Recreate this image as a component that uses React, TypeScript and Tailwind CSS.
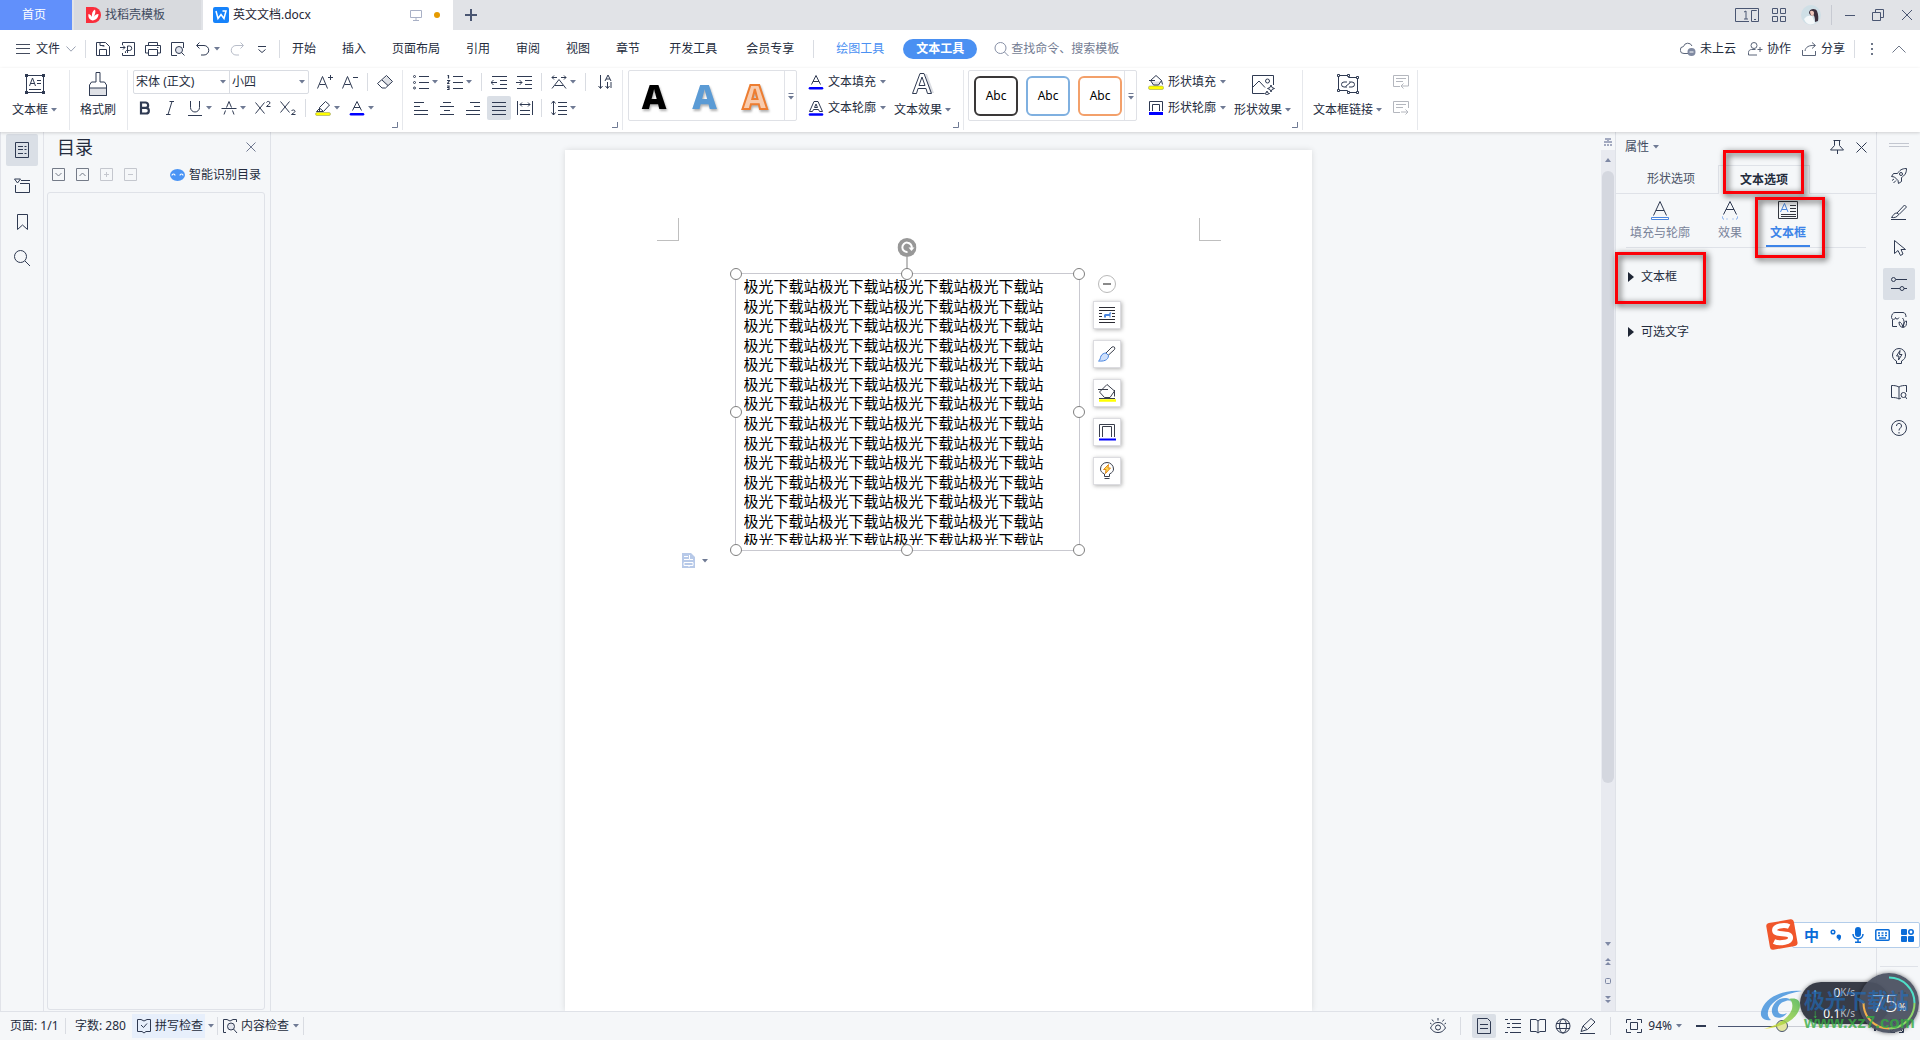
import type { ReactNode } from "react";

const INK = "#2f3a52";
const PHRASE = "极光下载站";

/* ---------- small building blocks ---------- */

function Ico({ w = 16, h = 16, c = INK, children }: { w?: number; h?: number; c?: string; children: ReactNode }) {
  return (
    <svg width={w} height={h} viewBox={`0 0 ${w} ${h}`} fill="none" stroke={c} className="block shrink-0" aria-hidden="true">
      {children}
    </svg>
  );
}

function Caret() {
  return (
    <svg width="6" height="4" viewBox="0 0 6 4" className="block shrink-0" aria-hidden="true">
      <path d="M0 0h6L3 3.6z" fill="#6f7a94" />
    </svg>
  );
}

function Sep({ tall = false }: { tall?: boolean }) {
  return <div className={tall ? "w-px h-[60px] shrink-0 bg-[#e6e8ec]" : "w-px h-[18px] shrink-0 bg-[#d9dce2]"} />;
}

function Btn({ label, drop, children }: { label: string; drop?: boolean; children: ReactNode }) {
  return (
    <button aria-label={label} className="flex items-center gap-[3px] shrink-0">
      {children}
      {drop && <Caret />}
    </button>
  );
}

function BigBtn({ label, drop, children }: { label: string; drop?: boolean; children: ReactNode }) {
  return (
    <button className="flex flex-col items-center shrink-0">
      <span className="flex h-7 items-center">{children}</span>
      <span className="flex h-6 items-center gap-[3px] leading-4">
        {label}
        {drop && <Caret />}
      </span>
    </button>
  );
}

function RowBtn({ label, children }: { label: string; children: ReactNode }) {
  return (
    <button className="flex h-6 items-center gap-1 leading-[18px]">
      {children}
      {label}
      <Caret />
    </button>
  );
}

function Launcher() {
  return (
    <button aria-label="更多设置" className="absolute right-1 bottom-1">
      <Ico w={6} h={6} c="#6f7a94">
        <path d="M5.5 0v5.5H0" />
      </Ico>
    </button>
  );
}

/* ---------- title bar ---------- */

function TitleBar() {
  return (
    <header className="flex h-[30px] shrink-0 items-stretch bg-[#e1e3e7]">
      <button className="w-[72px] bg-[#6190fb] pr-1 text-white">首页</button>
      <button className="ml-[2px] flex w-[127px] items-center gap-1 bg-[#d8dade] pl-3 text-[#3f4a60]">
        <svg width="15" height="16" viewBox="0 0 15 16">
          <path d="M0 0h7a8 8 0 0 1 0 16H0z" fill="#fa2e3c" />
          <path d="M6.500 13.500C3 12.500 2 10 2.500 7c2 .5 3 1.500 3.500 3C5.500 6.500 6.500 4 9 2.500c1 2.500 0 5-1.500 8 1-2 2.500-3.500 5-3.500 0 3.500-2.500 6-6 6.500z" fill="#fff" />
        </svg>
        找稻壳模板
      </button>
      <div className="ml-[2px] flex w-[250px] items-center bg-white pl-[10px] text-[#1f2635]">
        <svg width="16" height="16" viewBox="0 0 16 16">
          <rect width="16" height="16" rx="2" fill="#1683fb" />
          <path d="M3 4l2 7.500L8 7.500l3 4L13 4H9.500" fill="none" stroke="#fff" strokeWidth="1.500" />
        </svg>
        <span className="ml-1 flex-1">英文文档.docx</span>
        <Ico w={12} h={12} c="#a9b1c6">
          <path d="M.5 1.500h11v7H.5zM6 8.500v3M3 11.500h6" />
        </Ico>
        <span className="mr-[13px] ml-3 size-[6px] rounded-full bg-[#e59a00]" />
      </div>
      <button aria-label="新建" className="flex w-9 items-center justify-center">
        <Ico w={12} h={12} c="#4a5672">
          <path d="M6 0v12M0 6h12" strokeWidth="2" />
        </Ico>
      </button>
      <div className="ml-auto flex items-center pr-[7px]">
        <Ico w={24} h={14} c="#4a5672">
          <path d="M14 13.500H.5V.5h23v13h-7v-11h5V2M19 11.500h2M9 4l2-1v8M9 11h4" />
        </Ico>
        <span className="ml-[13px]">
          <Ico w={14} h={14} c="#4a5672">
            <path d="M.5.5h5v5h-5zM8.500.5h5v5h-5zM.5 8.500h5v5h-5zM8.500 8.500h5v5h-5z" />
          </Ico>
        </span>
        <svg width="20" height="20" viewBox="0 0 20 20" className="ml-[15px]">
          <circle cx="10" cy="10" r="10" fill="#cfdfe6" />
          <path d="M8 8c0-5 7-5 8-2 1.500 4 1.500 7 1 10l-3 1c0-4-.5-6-1.500-7-1 2-3 1-4.500-2z" fill="#3b2f3c" />
          <path d="M9 6.500c1.500-1.500 4-.5 4 1.500s-1 3-2 3-2-2.500-2-4.500z" fill="#f1c9bd" />
          <path d="M3 14c2-3 5-4 8-3l3 7c-5 3-9 1-11-4z" fill="#f4f8fa" />
        </svg>
        <div className="mx-[10px] h-5 w-px bg-[#c7cad2]" />
        <button aria-label="最小化" className="mx-[2px]">
          <Ico w={12} h={12} c="#4a5672"><path d="M1 6.500h10" /></Ico>
        </button>
        <button aria-label="还原" className="ml-[14px]">
          <Ico w={12} h={12} c="#4a5672"><path d="M.5 3.500h8v8h-8zM3.500 3V.5h8v8H9" /></Ico>
        </button>
        <button aria-label="关闭" className="ml-[17px]">
          <Ico w={12} h={12} c="#4a5672"><path d="M1 1l10 10M11 1L1 11" /></Ico>
        </button>
      </div>
    </header>
  );
}

/* ---------- menu bar ---------- */

const MENUS = ["开始", "插入", "页面布局", "引用", "审阅", "视图", "章节"];
const EXTRA_MENUS = ["开发工具", "会员专享"];

function MenuBar() {
  return (
    <nav className="flex h-[38px] shrink-0 items-center bg-white pl-4">
      <button className="flex items-center leading-[18px]">
        <Ico w={14} h={10} c="#444c5e"><path d="M0 .5h14M0 4.500h14M0 9.500h14" /></Ico>
        <span className="mx-[6px]">文件</span>
        <Ico w={10} h={6} c="#9aa1b1"><path d="M.5.5L5 5.200 9.500.5" /></Ico>
      </button>
      <div className="ml-[9px] flex items-center gap-[9px]">
        <Sep />
        <Btn label="保存">
          <Ico><path d="M1.500 1.500h9l4 4v9h-13zM4.500 14V8.500h7V14M5 1.500v3h4M7.500 5h2" /></Ico>
        </Btn>
        <Btn label="输出为PDF">
          <Ico><path d="M2.500 4V1.500h12v13h-12V12M0 6.500h5M3 4.500l2 2-2 2M7.500 12V5h2a2 2 0 0 1 0 4.500h-3a2 2 0 0 0-1 2.500" /></Ico>
        </Btn>
        <Btn label="打印">
          <Ico><path d="M3.500 4V1.500h9V4M3.500 12h-3V4.500h15V12h-3M3.500 8.500h9v6h-9zM12 6.500h1.500" /></Ico>
        </Btn>
        <Btn label="打印预览">
          <Ico><path d="M7 14.500H1.500v-13h12V7" /><circle cx="9" cy="9" r="3.500" fill="#e3e6ee" /><path d="M11.500 11.500l3 3" /></Ico>
        </Btn>
        <Btn label="撤销" drop>
          <Ico><path d="M4.500 1.500l-3 3 3 3M2 4.500h7a4.500 4.500 0 0 1 0 9.500H6" /></Ico>
        </Btn>
        <Btn label="恢复">
          <Ico c="#b8bdc9"><path d="M11.500 1.500l3 3-3 3M14 4.500H7A4.500 4.500 0 0 0 7 14h3" /></Ico>
        </Btn>
        <Btn label="自定义快速访问工具栏">
          <Ico><path d="M4 5.500h8M4.500 8.500L8 11.500l3.500-3" /></Ico>
        </Btn>
        <Sep />
      </div>
      <div className="ml-3 flex items-center gap-[26px] leading-[18px]">
        {MENUS.map((m) => (
          <button key={m}>{m}</button>
        ))}
      </div>
      <div className="ml-[29px] flex items-center gap-[29px] leading-[18px]">
        {EXTRA_MENUS.map((m) => (
          <button key={m}>{m}</button>
        ))}
      </div>
      <div className="ml-[19px] flex items-center leading-[18px]">
        <Sep />
        <button className="ml-[22px] text-[#4a90f2]">绘图工具</button>
        <button className="ml-[19px] h-5 w-[74px] rounded-full bg-[#4a90f2] font-bold text-white">文本工具</button>
        <label className="ml-[17px] flex items-center gap-[2px]">
          <Ico w={15} c="#8790a6"><circle cx="6.500" cy="7" r="5.500" /><path d="M10.500 11l4 4" /></Ico>
          <input aria-label="查找命令" placeholder="查找命令、搜索模板" className="w-[120px] bg-transparent outline-none placeholder:text-[#737c93]" />
        </label>
      </div>
      <div className="ml-auto flex items-center pr-[14px] leading-[18px]">
        <button className="flex items-center gap-1">
          <Ico c="#5b6579">
            <path d="M8 12.500H4a3.500 3.500 0 0 1-.5-7A4.500 4.500 0 0 1 12 5" />
            <circle cx="11.500" cy="11" r="4" fill="#7f89a1" stroke="none" />
            <path d="M9.500 11h4" stroke="#fff" />
          </Ico>
          未上云
        </button>
        <button className="ml-3 flex items-center gap-1">
          <Ico w={15} c="#5b6579"><circle cx="6" cy="4.500" r="3" /><path d="M9 14H.5v-2.500c0-2 1.500-3 3-3h4M12 6v5M9.500 8.500h5" /></Ico>
          协作
        </button>
        <button className="ml-[11px] flex items-center gap-1">
          <Ico w={15} c="#5b6579"><path d="M.5 9v5.500h13V10M3 10c.5-4 4-6 10-5.500M10 1.500l3.500 3-3.500 3" /></Ico>
          分享
        </button>
        <div className="ml-[9px]"><Sep /></div>
        <button aria-label="更多" className="mr-[18px] ml-4">
          <svg width="3" height="14" viewBox="0 0 3 14"><path d="M0 1h2v2H0zM0 6h2v2H0zM0 11h2v2H0z" fill="#6d7688" /></svg>
        </button>
        <button aria-label="收起功能区">
          <Ico w={14} h={8} c="#6d7688"><path d="M.5 7.500L7 1l6.500 6.500" /></Ico>
        </button>
      </div>
    </nav>
  );
}

/* ---------- ribbon ---------- */

function OutlinedBox() {
  return (
    <Ico>
      <path d="M1.500 11V1.500h13V11M4.500 11V4.500h7V11" />
      <path d="M1 13.500h14" stroke="#0000ff" strokeWidth="3" />
    </Ico>
  );
}

function Bucket() {
  return (
    <Ico>
      <path d="M3 7.500h10l-3 4.500H6z" fill="#dfe1e6" stroke="none" />
      <path d="M2.500 6.500l5.500-5 5.500 5-3 4.500h-5zM1 6.500h6M13.500 6.500l1 4" />
      <rect x=".5" y="12" width="15" height="3.500" rx="1.500" fill="#ffff00" stroke="#8b8f5a" strokeWidth=".5" />
    </Ico>
  );
}

const TEXT_STYLES = [
  { name: "黑色", cls: "text-black" },
  { name: "蓝色", cls: "text-[#5b9bd5]" },
  { name: "橙色轮廓", cls: "text-[#f8cbad] [-webkit-text-stroke:2px_#ed7d31]" },
];

const SHAPE_STYLES = [
  { name: "黑色形状", cls: "border-[#3a3838]" },
  { name: "蓝色形状", cls: "border-[#7fb0e0]" },
  { name: "橙色形状", cls: "border-[#f3a06a]" },
];

function GalleryMore() {
  return (
    <button aria-label="更多样式" className="flex w-3 items-center justify-center self-stretch border-l border-[#e1e3e8]">
      <Ico w={6} h={8} c="#6f7a94"><path d="M.5 1.500h5" /><path d="M0 4h6L3 7.500z" fill="#6f7a94" stroke="none" /></Ico>
    </button>
  );
}

function Ribbon() {
  return (
    <section className="relative z-10 flex h-16 shrink-0 bg-white pt-[2px] leading-4 shadow-[0_1px_3px_rgba(0,0,0,0.16)]">
      <div className="flex pr-3 pl-3">
        <BigBtn label="文本框" drop>
          <Ico w={22} h={22}>
            <path d="M2.500 2.500h17v17h-17z" />
            <path d="M1 1h3v3H1zM18 1h3v3h-3zM1 18h3v3H1zM18 18h3v3h-3z" fill={INK} stroke="none" />
            <path d="M5.500 13l3-8 3 8M6.500 10.500h4M13 7.500h4M13 10.500h4M5 16.500h12" />
          </Ico>
        </BigBtn>
      </div>
      <Sep tall />
      <div className="flex pr-[11px] pl-[10px]">
        <BigBtn label="格式刷">
          <Ico w={20} h={26}>
            <path d="M1.500 17h17v7.500h-17z" fill="#dfe1e6" />
            <path d="M8 1.500h4V11h4.500l2 3v10.500h-17V14l2-3H8z" />
          </Ico>
        </BigBtn>
      </div>
      <Sep tall />

      <div className="relative flex flex-col gap-[2px] pr-[9px] pl-[5px]">
        <div className="flex h-6 items-center">
          <div className="flex h-6 rounded-[2px] border border-[#d9dce2]">
            <label className="relative flex items-center">
              <select aria-label="字体" className="w-[95px] appearance-none pl-[2px]"><option>宋体 (正文)</option></select>
              <span className="pointer-events-none absolute right-[3px]"><Caret /></span>
            </label>
            <label className="relative flex items-center border-l border-[#d9dce2]">
              <select aria-label="字号" className="w-[78px] appearance-none pl-[2px]"><option>小四</option></select>
              <span className="pointer-events-none absolute right-[3px]"><Caret /></span>
            </label>
          </div>
          <div className="ml-2 flex items-center gap-[9px]">
            <Btn label="增大字号"><Ico><path d="M.5 14.500l5-12 5 12M2.500 10.500h6M13.500 1v5M11 3.500h5" /></Ico></Btn>
            <Btn label="减小字号"><Ico><path d="M.5 14.500l5-12 5 12M2.500 10.500h6M11 3.500h5" /></Ico></Btn>
            <Sep />
            <Btn label="清除格式"><Ico><path d="M5 7l5-5 5.500 5.500-5 5z" fill="#dfe1e6" stroke="none" /><path d="M.5 9.500L9.500 1.500l6 6-7 6.500H5zM5 6l6 5.500" /></Ico></Btn>
          </div>
        </div>
        <div className="ml-1 flex h-6 items-center gap-[9px]">
          <Btn label="加粗"><Ico><path d="M4 2.500v11h5a2.800 2.800 0 0 0 0-5.700H4h4.500a2.600 2.600 0 0 0 0-5.300z" strokeWidth="2.200" /></Ico></Btn>
          <Btn label="倾斜"><Ico><path d="M7.500 1.500H12M4 14.500h4.500M10 1.500l-4 13" /></Ico></Btn>
          <Btn label="下划线" drop><Ico><path d="M3.500 1v6.500a4.500 4.500 0 0 0 9 0V1M1 15.500h14" /></Ico></Btn>
          <Btn label="删除线" drop><Ico><path d="M3 14.500l1.500-4M5.500 7.500L8 1.500l2.500 6M11.500 10.500l1.500 4M.5 8.500h15" /></Ico></Btn>
          <Btn label="上标"><Ico><path d="M.5 2.500l9 11M9.500 2.500l-9 11M11.500 2.500c.5-1.500 3.500-1.500 3.500.5 0 1-3.500 3-3.500 3.500H15.500" /></Ico></Btn>
          <Btn label="下标"><Ico><path d="M.5 1.500l9 11M9.500 1.500l-9 11M11.500 11c.5-1.500 3.500-1.500 3.500.5 0 1-3.500 2.500-3.500 3H15.500" /></Ico></Btn>
          <Sep />
          <Btn label="突出显示" drop>
            <Ico>
              <path d="M4.500 7.500l6-6 4 3.500-6 6.500h-4zM4.500 8l3.500 3M4 9l-2.500 2.500H6" />
              <rect x=".5" y="12.500" width="15" height="3" rx="1.500" fill="#ffff00" stroke="#8b8f5a" strokeWidth=".5" />
            </Ico>
          </Btn>
          <Btn label="字体颜色" drop>
            <Ico><path d="M3.500 10.500l4.500-9 4.500 9M5 7.500h6" /><path d="M2 14.200h12" stroke="#0000ff" strokeWidth="2.600" strokeLinecap="round" /></Ico>
          </Btn>
        </div>
        <Launcher />
      </div>
      <Sep tall />

      <div className="relative flex w-[219px] flex-col gap-[2px]">
        <div className="flex h-6 items-center gap-[9px] pl-[10px]">
          <Btn label="项目符号" drop>
            <Ico><circle cx="1.500" cy="2.500" r="1" /><circle cx="1.500" cy="8.500" r="1" /><circle cx="1.500" cy="14" r="1" /><path d="M6 2.500h10M6 8.500h10M6 14.500h10" /></Ico>
          </Btn>
          <Btn label="编号" drop>
            <Ico><path d="M.5 1.500h1v3M0 6.500h2.500l-2 3h2M0 12h2v3.500H0M0 13.500h2" strokeWidth="1.200" /><path d="M6 2.500h10M6 8.500h10M6 14.500h10" /></Ico>
          </Btn>
          <Sep />
          <Btn label="减少缩进"><Ico><path d="M1 2.500h15M9 6.500h7M9 10.500h7M1 14.500h15M0 8.500h6M2.500 6L0 8.500 2.500 11" /></Ico></Btn>
          <Btn label="增加缩进"><Ico><path d="M1 2.500h15M9 6.500h7M9 10.500h7M1 14.500h15M0 8.500h6M3.500 6L6 8.500 3.500 11" /></Ico></Btn>
          <Sep />
          <Btn label="字符缩放" drop><Ico><path d="M1 3.500h5M3 1.500l-2 2 2 2M10 3.500h5M13 1.500l2 2-2 2M1 14.500l7-9 7 9M4 11.500h8" /></Ico></Btn>
          <Sep />
          <button aria-label="排序" className="flex w-5 justify-center">
            <Ico w={14}><path d="M2.500 1v13M.5 12l2 2.500 2-2.500M9.500 8v6M7.500 12l2 2.500 2-2.500M7 7l3-6 3 6M8 5h4M13 8v6" /></Ico>
          </button>
        </div>
        <div className="flex h-6 items-center gap-[2px] pl-[6px]">
          <button aria-label="左对齐" className="flex size-6 items-center justify-center"><Ico><path d="M1 2.500h10M1 6.500h6M1 10.500h14M1 14.500h14" /></Ico></button>
          <button aria-label="居中" className="flex size-6 items-center justify-center"><Ico><path d="M4 2.500h8M1 6.500h14M5 10.500h6M1 14.500h14" /></Ico></button>
          <button aria-label="右对齐" className="flex size-6 items-center justify-center"><Ico><path d="M5 2.500h10M9 6.500h6M1 10.500h14M1 14.500h14" /></Ico></button>
          <button aria-label="两端对齐" className="flex size-6 items-center justify-center rounded-[2px] bg-[#dadfe6]"><Ico><path d="M1 2.500h14M1 6.500h14M1 10.500h14M1 14.500h14" /></Ico></button>
          <button aria-label="分散对齐" className="mr-[2px] flex size-6 items-center justify-center"><Ico><path d="M.5 1v14M15.500 1v14M3 4.500h10M5 2.500l-2 2 2 2M11 2.500l2 2-2 2M3 10.500h10M3 14.500h10" /></Ico></button>
          <Sep />
          <div className="ml-[7px]">
            <Btn label="行距" drop><Ico><path d="M2.500 1v14M.5 3.500l2-2.500 2 2.500M.5 12.500l2 2.500 2-2.500M7 2.500h9M7 6.500h9M7 10.500h9M7 14.500h9" /></Ico></Btn>
          </div>
        </div>
        <Launcher />
      </div>
      <Sep tall />

      <div className="relative flex w-[340px] pl-[5px]">
        <div className="flex h-[51px] w-[169px] items-center rounded-[2px] border border-[#dfe1e6]">
          <div className="flex flex-1 justify-around pr-1">
            {TEXT_STYLES.map((s) => (
              <button key={s.name} aria-label={s.name} className="w-10 font-['Open_Sans'] text-[34px] leading-9 font-extrabold drop-shadow-[1px_2px_1px_rgba(0,0,0,0.3)]">
                <span className={s.cls}>A</span>
              </button>
            ))}
          </div>
          <GalleryMore />
        </div>
        <div className="ml-[11px] flex flex-col gap-[2px]">
          <RowBtn label="文本填充">
            <Ico><path d="M3.500 10.500l4.500-9 4.500 9M5 7.500h6" /><path d="M2 14.200h12" stroke="#0000ff" strokeWidth="2.600" strokeLinecap="round" /></Ico>
          </RowBtn>
          <RowBtn label="文本轮廓">
            <Ico><path d="M1.500 11.500L6 1.500h4l4.500 10h-3l-1-2h-5l-1 2zM6.500 7.500L8 4l1.500 3.500z" /><path d="M2 14.500h12" stroke="#0000ff" strokeWidth="2.600" strokeLinecap="round" /></Ico>
          </RowBtn>
        </div>
        <div className="ml-2 flex">
          <BigBtn label="文本效果" drop>
            <Ico w={24} h={24}>
              <path d="M14 2l2 0 7 19h-4z" fill="#dcdee3" stroke="none" />
              <path d="M1.500 21.500L9 1.500h4l7.500 20h-4l-1.500-5H7l-1.500 5zM8 13.500h6L11 5z" />
            </Ico>
          </BigBtn>
        </div>
        <Launcher />
      </div>
      <Sep tall />

      <div className="relative flex w-[338px] pl-1">
        <div className="flex h-[51px] w-[169px] items-center rounded-[2px] border border-[#dfe1e6]">
          <div className="flex flex-1 gap-2 pl-[5px]">
            {SHAPE_STYLES.map((s) => (
              <button key={s.name} aria-label={s.name} className={`h-10 w-11 rounded-md border-2 text-black ${s.cls}`}>
                Abc
              </button>
            ))}
          </div>
          <GalleryMore />
        </div>
        <div className="ml-[11px] flex flex-col gap-[2px]">
          <RowBtn label="形状填充"><Bucket /></RowBtn>
          <RowBtn label="形状轮廓"><OutlinedBox /></RowBtn>
        </div>
        <div className="ml-2 flex">
          <BigBtn label="形状效果" drop>
            <Ico w={24} h={22}>
              <path d="M13 20.500H1.500v-18h21V12M2 14l6-6 6 6.500" />
              <circle cx="16.500" cy="8" r="2" />
              <path d="M20 12l1 2.500 2.500 1-2.500 1-1 2.500-1-2.500-2.500-1 2.500-1zM16 18l.7 1.800 1.800.7-1.800.7-.7 1.800-.7-1.800-1.800-.7 1.800-.7z" />
            </Ico>
          </BigBtn>
        </div>
        <Launcher />
      </div>
      <Sep tall />

      <div className="flex pr-2 pl-[10px]">
        <BigBtn label="文本框链接" drop>
          <Ico w={24} h={22}>
            <path d="M2.500 2.500h10v2h9v15h-10v-2h-9z" />
            <path d="M1.500 1.500h2v2h-2zM11.500 1.500h2v2h-2zM20.500 3.500h2v2h-2zM1.500 16.500h2v2h-2zM11.500 18.500h2v2h-2zM20.500 18.500h2v2h-2z" fill="#fff" />
            <path d="M11 9H8a2.500 2.500 0 0 0 0 5h3M13 9h3a2.500 2.500 0 0 1 0 5h-3M9.500 13.500l5-4" />
          </Ico>
        </BigBtn>
        <div className="ml-[11px] flex flex-col gap-[2px]">
          <button aria-label="断开向前链接" className="flex h-6 items-center">
            <Ico c="#b4b7be"><path d="M7 12.500H.5v-11h15V8M3 4.500h10M3 7.500h7M15.500 8v4H8M10.500 9.500L8 12l2.500 2.500" /></Ico>
          </button>
          <button aria-label="断开向后链接" className="flex h-6 items-center">
            <Ico c="#b4b7be"><path d="M7 12.500H.5v-11h15V8M3 4.500h10M3 7.500h7M8 12h7M12.500 9.500L15 12l-2.500 2.500" /></Ico>
          </button>
        </div>
      </div>
      <Sep tall />
    </section>
  );
}

/* ---------- left side ---------- */

function LeftRail() {
  return (
    <aside className="flex w-11 shrink-0 flex-col items-center gap-1 border-x border-[#e1e3e9] pt-[2px]">
      <button aria-label="目录" className="flex size-8 items-center justify-center rounded-[2px] bg-[#dadfe6]">
        <Ico><path d="M1.500.5h13v15h-13zM4 4.500h5M4 7.500h5M4 11.500h5M10.500 4.500h2M10.500 7.500h2M10.500 11.500h2" /></Ico>
      </button>
      <button aria-label="章节" className="flex size-8 items-center justify-center">
        <Ico><path d="M.5 1h6L3.500 5zM7 2.500h9M1.500 7v7.500h14v-9H6" /></Ico>
      </button>
      <button aria-label="书签" className="flex size-8 items-center justify-center">
        <Ico><path d="M3.500.5h10v15l-5-4.500-5 4.500z" /></Ico>
      </button>
      <button aria-label="查找" className="flex size-8 items-center justify-center">
        <Ico><circle cx="6.500" cy="6.500" r="6" /><path d="M11 11l5 5" /></Ico>
      </button>
    </aside>
  );
}

function TocPanel() {
  return (
    <aside className="flex w-[227px] shrink-0 flex-col border-r border-[#dfe2e8] pt-[3px] pr-[5px] pb-px pl-[3px]">
      <div className="flex h-6 items-center pr-[9px] pl-[10px]">
        <h2 className="flex-1 text-[18px] leading-6">目录</h2>
        <button aria-label="关闭目录">
          <Ico w={10} h={10} c="#6f7890"><path d="M.5.5l9 9M9.500.5l-9 9" /></Ico>
        </button>
      </div>
      <div className="mb-[2px] flex h-[31px] items-center gap-[11px] pl-[5px]">
        <button aria-label="展开"><Ico w={13} h={13} c="#747b88"><path d="M.5.5h12v12H.5zM3.500 5l3 3 3-3" /></Ico></button>
        <button aria-label="收起"><Ico w={13} h={13} c="#747b88"><path d="M.5.5h12v12H.5zM3.500 8l3-3 3 3" /></Ico></button>
        <button aria-label="添加"><Ico w={13} h={13} c="#c4c7ce"><path d="M.5.5h12v12H.5zM4 6.500h5M6.500 4v5" /></Ico></button>
        <button aria-label="删除"><Ico w={13} h={13} c="#c4c7ce"><path d="M.5.5h12v12H.5zM4 6.500h5" /></Ico></button>
        <button className="ml-auto flex items-center gap-1 pr-1 leading-4">
          <svg width="15" height="12" viewBox="0 0 15 12">
            <ellipse cx="7.500" cy="6" rx="7.500" ry="6" fill="#4a94f5" />
            <path d="M2 6.500c0-2 3-2 3 0M10 6.500c0-2 3-2 3 0" fill="none" stroke="#fff" strokeWidth="1.200" />
          </svg>
          智能识别目录
        </button>
      </div>
      <div className="flex-1 rounded-[3px] border border-[#dfe2e8]" />
    </aside>
  );
}

/* ---------- document ---------- */

// resize handles: corners and edge midpoints of the selected box
const HANDLES = [
  "left-0 top-0", "left-1/2 top-0", "left-full top-0",
  "left-0 top-1/2", "left-full top-1/2",
  "left-0 top-full", "left-1/2 top-full", "left-full top-full",
];

const FLOAT_TOOLS: { name: string; icon: ReactNode }[] = [
  {
    name: "布局选项",
    icon: (
      <Ico c="#2b2b33">
        <path d="M0 .5h16M0 3.500h16M0 6.500h3M13 6.500h3M0 9.500h3M13 9.500h3M0 12.500h16M0 15.500h16" />
        <path d="M5 10.500V8l1-1h4l1-2 1.500 1-1 1v3.500h-1V9H7v1.500z" fill="#4a86e0" stroke="none" />
      </Ico>
    ),
  },
  {
    name: "格式",
    icon: (
      <Ico w={18} c="#3a3f4c">
        <path d="M8 7l6-6c2-1 3.500.5 2.500 2.500l-6.500 6z" />
        <path d="M8 7l2.500 2.500c0 5-5.500 6-10 5.500 2-1 1.500-3 2.500-5 1-2 3-3 5-3z" fill="#cfe0fb" stroke="#4a86e0" />
      </Ico>
    ),
  },
  {
    name: "填充",
    icon: (
      <Ico w={18} h={18} c="#3a3f4c"><path d="M1.500 8L9 .5 16.500 7 12 13.500H6.500zM0 5.500h10M16.500 6v6.500M1 14.500h16" /><path d="M1 16.500h17" stroke="#ffff00" strokeWidth="2.500" /></Ico>
    ),
  },
  {
    name: "轮廓",
    icon: (
      <Ico w={18} h={18} c="#3a3f4c"><path d="M1.500 14V1.500h15V14M4.500 14V3.500h9V14" /><path d="M1 16.500h17" stroke="#0000ff" strokeWidth="2" /></Ico>
    ),
  },
  {
    name: "灵感",
    icon: (
      <Ico w={16} h={18} c="#3a3f4c">
        <path d="M5.500 14.500v-2.500C2.500 10.500 1.500 9 1.500 7a6.500 6.500 0 0 1 13 0c0 2-1 3.500-4 5v2.500zM5.500 16.500h5" />
        <path d="M9.500 2.500l-5 5h2.500l-.5 4 5-5.500H9z" fill="#ffd84d" stroke="#e08a1e" />
      </Ico>
    ),
  },
];

function TextBox() {
  return (
    <div className="absolute top-[123px] left-[170px] h-[278px] w-[345px] border border-[#c9c9d0]">
      {/* rotation handle */}
      <div className="absolute bottom-full left-1/2 flex -translate-x-1/2 flex-col items-center">
        <svg width="19" height="19" viewBox="0 0 19 19">
          <circle cx="9.500" cy="9.500" r="9.500" fill="#989898" />
          <path d="M10 14a4.700 4.700 0 1 1 4.200-4" fill="none" stroke="#fff" strokeWidth="2" />
          <path d="M11 9.500h6l-3 3.500z" fill="#fff" />
        </svg>
        <div className="h-[17px] w-px bg-[#808080]" />
      </div>
      <div className="mt-[2px] ml-2 h-[269px] overflow-hidden">
        <div className="grid h-[274px] auto-rows-fr text-[15px] leading-5 whitespace-nowrap text-black">
          {Array.from({ length: 14 }, (_, i) => (
            <p key={i}>{PHRASE.repeat(4)}</p>
          ))}
        </div>
      </div>
      {HANDLES.map((pos) => (
        <span key={pos} className={`absolute size-3 -translate-1/2 rounded-full border border-[#7f7f7f] bg-white ${pos}`} />
      ))}
    </div>
  );
}

function Canvas() {
  return (
    <main className="flex min-w-0 flex-1 justify-center overflow-hidden pt-[18px] pl-1">
      <div className="relative w-[747px] bg-white shadow-[0_0_6px_rgba(0,0,0,0.12)]">
        {/* margin corners */}
        <div className="absolute top-[68px] left-[92px] h-[23px] w-[22px] border-r border-b border-[#bfbfbf]" />
        <div className="absolute top-[68px] right-[91px] h-[23px] w-[22px] border-b border-l border-[#bfbfbf]" />
        <TextBox />
        <div className="absolute top-[125px] left-[528px] flex flex-col items-center">
          <button aria-label="收起工具" className="mb-2 flex size-[18px] items-center justify-center rounded-full border border-[#b9b9b9] bg-white">
            <span className="h-[2px] w-2 bg-[#8a8a8a]" />
          </button>
          <div className="flex flex-col gap-[11px]">
            {FLOAT_TOOLS.map((t) => (
              <button key={t.name} aria-label={t.name} className="flex size-7 items-center justify-center border border-[#dcdce0] bg-white shadow-[1px_1px_4px_rgba(0,0,0,0.3)]">
                {t.icon}
              </button>
            ))}
          </div>
        </div>
        <button aria-label="粘贴选项" className="absolute top-[403px] left-[117px] flex items-center gap-[7px]">
          <svg width="13" height="15" viewBox="0 0 13 15">
            <path d="M0 0h9l4 4v11H0z" fill="#b7c9e8" />
            <path d="M2 3.500h4M2 6.500h5M7.500 2v4.500H11M2 9.500h9v3H2zM7 12v2" fill="none" stroke="#fff" />
          </svg>
          <Caret />
        </button>
      </div>
    </main>
  );
}

function ScrollBar() {
  return (
    <div className="flex w-[14px] shrink-0 flex-col items-center">
      <div className="flex h-[18px] items-end pb-1">
        <svg width="8" height="8" viewBox="0 0 8 8"><path d="M1 0h6v2H5v1h3v2H0V3h3V2H1zM0 6h2v2H0zM3 6h2v2H3zM6 6h2v2H6z" fill="#a3aac0" /></svg>
      </div>
      <div className="flex w-full flex-1 flex-col items-center bg-[#e8eaf0] pt-2 pb-[7px]">
        <svg width="6" height="4" viewBox="0 0 6 4"><path d="M0 4h6L3 0z" fill="#7f89a5" /></svg>
        <div className="mt-[9px] h-[612px] w-3 rounded-full bg-[#d4d7df]" />
        <div className="mt-auto flex flex-col items-center gap-3">
          <svg width="6" height="4" viewBox="0 0 6 4"><path d="M0 0h6L3 4z" fill="#7f89a5" /></svg>
          <svg width="6" height="8" viewBox="0 0 6 8"><path d="M0 3h6L3 0zM0 7h6L3 4z" fill="#7f89a5" /></svg>
          <svg width="6" height="6" viewBox="0 0 6 6"><rect x=".5" y=".5" width="5" height="5" rx="1" fill="none" stroke="#7f89a5" /></svg>
          <svg width="6" height="8" viewBox="0 0 6 8"><path d="M0 0h6L3 3zM0 4h6L3 7z" fill="#7f89a5" /></svg>
        </div>
      </div>
    </div>
  );
}

/* ---------- properties panel ---------- */

const MARKS = ["top-[18px] left-[107px] h-11 w-[81px]", "top-[65px] left-[139px] h-[61px] w-[70px]", "top-[120px] -left-px h-[52px] w-[91px]"];

function PropertiesPanel() {
  return (
    <aside className="relative flex w-[261px] shrink-0 flex-col border-l border-[#dfe2e8] leading-[18px]">
      <div className="flex h-[33px] items-center pr-[9px] pb-[3px] pl-[9px]">
        <button className="flex flex-1 items-center gap-1 text-[#3f4a60]">
          属性
          <Caret />
        </button>
        <button aria-label="固定" className="mr-3">
          <Ico w={14} h={14}><path d="M3.500.5h7M4.500.5v5l-4 4.500h13l-4-4.500v-5M7.500 10v4" /></Ico>
        </button>
        <button aria-label="关闭属性"><Ico w={11} h={11}><path d="M.5.5l10 10M10.500.5l-10 10" /></Ico></button>
      </div>
      <div className="flex h-[29px] items-stretch">
        <button className="w-[102px] border-b border-[#dfe2e8] pl-2 text-[#4a5366]">形状选项</button>
        <button className="w-[92px] border border-b-0 border-[#dfe2e8] font-bold">文本选项</button>
        <div className="flex-1 border-b border-[#dfe2e8]" />
      </div>
      <div className="mr-[10px] ml-[10px] flex border-b border-[#dfe2e8] text-[#79839a]">
        <button className="flex w-[68px] flex-col items-center pt-[6px]">
          <Ico w={18} h={20}><path d="M2.500 15.500L9 1.500l6.500 14M5 10.500h8" /><path d="M.5 17.500h17v2H.5z" stroke="#4a86e0" fill="#fff" /></Ico>
          <span className="mt-1 mb-[5px]">填充与轮廓</span>
        </button>
        <button className="mx-[18px] flex w-9 flex-col items-center pt-[6px]">
          <Ico w={16} h={20}><path d="M1.500 14.500L8 1.500l6.500 13M4 9.500h8" /><path d="M.5 16.500v1l1 2M15.500 16.500v1l-1 2M5 18.500v1M11 18.500v1" stroke="#6f9fea" /></Ico>
          <span className="mt-1 mb-[5px]">效果</span>
        </button>
        <button className="flex w-11 flex-col items-center border-b-2 border-[#3d84e8] pt-[7px] font-bold text-[#3d84e8]">
          <Ico w={20} h={18} c="#33373f"><path d="M.5.5h19v17H.5zM12 4.500h6M12 7.500h6M12 10.500h6M3 13.500h15M3 15.500h15" strokeWidth="1" /><path d="M2.500 11L6.500 2.500l3.500 8.500M4 8.500h5" stroke="#4a86e0" /></Ico>
          <span className="mt-[5px] mb-[2px]">文本框</span>
        </button>
      </div>
      <button className="mt-5 flex items-center gap-[7px] pl-3">
        <svg width="6" height="10" viewBox="0 0 6 10"><path d="M0 0v10l6-5z" fill="#1f2635" /></svg>
        文本框
      </button>
      <button className="mt-[37px] flex items-center gap-[7px] pl-3">
        <svg width="6" height="10" viewBox="0 0 6 10"><path d="M0 0v10l6-5z" fill="#1f2635" /></svg>
        可选文字
      </button>
      {MARKS.map((m) => (
        <div key={m} className={`pointer-events-none absolute border-3 border-[#fb0007] drop-shadow-[2px_2px_3px_rgba(0,0,0,0.75)] ${m}`} />
      ))}
    </aside>
  );
}

const RAIL: { name: string; icon: ReactNode; active?: boolean }[] = [
  { name: "稻壳资源", icon: <path d="M15.500.5c-5 0-7 2-9 5h-4L.5 8.500l3 .5 3.500 3.500.5 3 3-2v-4c3-2 5-4 5-9zM1 12.500l2-1.500M2.500 15l2.500-2.500M10 4.500a1.500 1.500 0 1 1 0 3 1.500 1.500 0 0 1 0-3" /> },
  { name: "编辑", icon: <path d="M6 9l7.500-8 2 2L8 10.500zM6 9c-3 0-3.500 2-5.500 4.500 3 .5 6-.5 7-3M0 15.500h15" /> },
  { name: "选择", icon: <path d="M3.500.5v13l3.500-3 2.500 5 2.500-1.500L10 9.500h4.500z" /> },
  { name: "属性", active: true, icon: <path d="M5 3.500h11M2.500 1.500a2 2 0 1 1 0 4 2 2 0 0 1 0-4M0 12.500h9M13 12.500h3M11 10.500a2 2 0 1 1 0 4 2 2 0 0 1 0-4" /> },
  { name: "稻壳", icon: <path d="M1.500 7.500v7H6M.5 5.500c0-3 1.500-5 3.500-5h8c2 0 3 2 3 4.500M.5 5.500c0 2.500 4 2.500 4 0 0 2 3 2 3.500 0M8 10c2 0 3 2 4 5M11.500 6c2 2 2 5 .5 9M15.500 9c-2 0-3 3-3.500 6M8 10c0 3 1 5 4 5.500 3-.5 4-3 3.500-6.500" /> },
  { name: "灵感", icon: <path d="M5.500 15.500V13C2.500 11.500 1.500 9.500 1.500 7a6.500 6.500 0 0 1 13 0c0 2.500-1 4.500-4 6v2.500zM9 2.500L5.500 8H8l-.5 4L11 6.500H8.500z" /> },
  { name: "阅读", icon: <path d="M8 3C5 1.500 3 1.500.5 1.500v12c3 0 5 0 7.500 1.500V3c2-1.500 5-1.500 7.500-1.500V8M8 15l2-1M12.500 8.500a2.500 2.500 0 1 1 0 5 2.500 2.500 0 0 1 0-5M14.500 13l1.500 2" /> },
  { name: "帮助", icon: <path d="M8 .5a7.500 7.500 0 1 1 0 15 7.500 7.500 0 0 1 0-15M5.500 6c0-3.500 5-3.500 5 0 0 2-2.500 2-2.500 4.500M8 12v1.500" /> },
];

function RightRail() {
  return (
    <aside className="flex w-11 shrink-0 flex-col items-center border-l border-[#dfe2e8] pt-[11px] pb-4">
      <div className="mb-[11px] h-1 w-5 border-y border-[#c3c7d0]" />
      <div className="flex flex-col gap-1 pt-[2px]">
        {RAIL.map((r) => (
          <button key={r.name} aria-label={r.name} className={`flex size-8 items-center justify-center rounded-[2px] ${r.active ? "bg-[#dadfe6]" : ""}`}>
            <Ico>{r.icon}</Ico>
          </button>
        ))}
      </div>
      <div className="mt-auto mb-6 h-px w-[38px] bg-[#dfe2e8]" />
      <button aria-label="更多">
        <Ico w={16} h={4}><path d="M1 2h2M7 2h2M13 2h2" strokeWidth="2" /></Ico>
      </button>
    </aside>
  );
}

/* ---------- status bar ---------- */

function StatusBar() {
  return (
    <footer className="flex h-[29px] shrink-0 items-center border-t border-[#dfe2e8] leading-4">
      <span className="w-[65px] pl-[10px]">页面: 1/1</span>
      <span className="h-4 w-[67px] border-l border-[#d9dce2] pl-[9px]">字数: 280</span>
      <button className="flex h-6 items-center gap-[3px] bg-[#e7effb] pr-[2px] pl-1">
        <Ico><path d="M5 1.500H1.500v12H6l2 1.500 2-1.500h4.500v-12H11L8 3 5 1.500M5 7l2.500 2.500L11 5.500" /></Ico>
        拼写检查
      </button>
      <span className="mx-[3px]"><Caret /></span>
      <Sep />
      <button className="mr-1 ml-1 flex items-center gap-[3px]">
        <Ico><path d="M4 14.500H1.500v-13H5L8 3l3-1.500h3.500V4" /><circle cx="9" cy="8.500" r="3.500" fill="#e3e6ee" /><path d="M11.500 11l3.500 4" /></Ico>
        内容检查
      </button>
      <Caret />
      <span className="ml-1"><Sep /></span>

      <div className="ml-auto flex items-center pr-4">
        <button aria-label="护眼模式">
          <Ico><path d="M.5 10C3 5.500 5 4.500 8 4.500s5 1 7.500 5.500C13 13.500 11 14.500 8 14.500S3 13.500.5 10zM8 0v2.500M2 1.500l1.500 2M14 1.500l-1.500 2M0 5l1.500 1M16 5l-1.500 1" /><circle cx="8" cy="9.500" r="2.500" /></Ico>
        </button>
        <span className="mr-[11px] ml-[14px]"><Sep /></span>
        <div className="flex items-center gap-[9px]">
          <button aria-label="页面视图" className="flex h-6 w-6 items-center justify-center rounded-[2px] bg-[#dadfe6]"><Ico><path d="M1.500.5h10l3 3v12h-13zM4 6.500h8M4 10.500h8" /></Ico></button>
          <Btn label="大纲"><Ico><path d="M0 1.500h3M5 1.500h11M2 5.500h3M7 5.500h9M2 9.500h3M7 9.500h9M0 14.500h3M5 14.500h11" /></Ico></Btn>
          <Btn label="阅读版式"><Ico><path d="M.5 1.500H6l2 1.500 2-1.500h5.500v12H10L8 15l-2-1.500H.5zM8 3v12" /></Ico></Btn>
          <Btn label="Web版式"><Ico><circle cx="8" cy="8" r="7" /><ellipse cx="8" cy="8" rx="3.500" ry="7" /><path d="M1 5.500h14M1 10.500h14" /></Ico></Btn>
          <Btn label="写作模式"><Ico><path d="M3 8l8-7.500L15 4 7.500 11.500 1 13.500zM3 8l4 3.500M0 15.500h15" /></Ico></Btn>
        </div>
        <span className="mr-[15px] ml-[14px]"><Sep /></span>
        <button aria-label="适合页面"><Ico><path d="M.5 5V1.500H5M11 1.500h4.500V5M15.500 11v3.500H11M5 14.500H.5V11M4.500 4.500h7v7h-7z" /></Ico></button>
        <button className="ml-[6px] flex items-center gap-1">94% <Caret /></button>
        <button aria-label="缩小" className="mr-3 ml-[14px]"><Ico w={10} h={10}><path d="M0 5h10" strokeWidth="2" /></Ico></button>
        <input
          type="range"
          aria-label="显示比例"
          defaultValue={43}
          className="h-3 w-[148px] appearance-none bg-[linear-gradient(#4a5672,#4a5672),linear-gradient(#c9ccd4,#c9ccd4)] bg-[length:58px_1px,100%_1px] bg-[position:left_center,center] bg-no-repeat [&::-webkit-slider-thumb]:size-3 [&::-webkit-slider-thumb]:appearance-none [&::-webkit-slider-thumb]:rounded-full [&::-webkit-slider-thumb]:border [&::-webkit-slider-thumb]:border-[#4a5672] [&::-webkit-slider-thumb]:bg-[#e3e6a0]"
        />
        <button aria-label="放大" className="mr-[10px] ml-1"><Ico w={10} h={10}><path d="M0 5h10M5 0v10" strokeWidth="2" /></Ico></button>
        <button aria-label="全屏"><Ico w={14} h={14}><path d="M.5 5V.5H5M9 .5h4.500V5M13.500 9v4.500H9M5 13.500H.5V9M1 1l4 4M13 1L9 5M1 13l4-4M13 13L9 9" /></Ico></button>
      </div>
    </footer>
  );
}

/* ---------- floating desktop widgets ---------- */

function ImeBar() {
  return (
    <div className="absolute right-0 bottom-[89px] z-20 flex items-center">
      <svg width="34" height="32" viewBox="0 0 34 32" className="z-10 -mr-2">
        <g transform="rotate(-10 16 16)">
          <rect x="2" y="2" width="28" height="27" rx="3" fill="#f0562b" />
          <path d="M24.500 9c-4-3-15-3.500-15 1.500S24 14 24 19.500 12 24.500 7 21" fill="none" stroke="#fff" strokeWidth="5" />
        </g>
      </svg>
      <div className="flex h-[26px] w-[128px] items-center justify-between rounded-[2px] border border-[#b3cdea] bg-white pr-[5px] pl-[11px] text-[15px] leading-5 font-bold text-[#0a6cd8]">
        中
        <svg width="12" height="12" viewBox="0 0 12 12"><circle cx="3" cy="3" r="1.800" fill="none" stroke="#0a6cd8" strokeWidth="1.500" /><path d="M9 5.500a2 2 0 0 1 2 2.500c0 2-1 3-2.500 4v-2a2 2 0 0 1 .5-4.500z" fill="#0a6cd8" /></svg>
        <svg width="12" height="16" viewBox="0 0 12 16"><rect x="3" y="0" width="6" height="10" rx="3" fill="#0a6cd8" /><path d="M1 7c0 6.500 10 6.500 10 0M6 12v3M3 15.200h6" fill="none" stroke="#0a6cd8" strokeWidth="1.500" /></svg>
        <svg width="15" height="12" viewBox="0 0 15 12"><rect x=".8" y=".8" width="13.400" height="10.400" rx="1" fill="none" stroke="#0a6cd8" strokeWidth="1.500" /><path d="M3 4h2M6.500 4h2M10 4h2M3 6.500h2M6.500 6.500h2M10 6.500h2M4 9h7" stroke="#0a6cd8" strokeWidth="1.300" /></svg>
        <svg width="13" height="13" viewBox="0 0 13 13"><rect width="6" height="6" rx="1" fill="#0a6cd8" /><circle cx="10" cy="3" r="2.200" fill="none" stroke="#0a6cd8" strokeWidth="1.600" /><rect y="7" width="6" height="6" rx="1" fill="#0a6cd8" /><rect x="7" y="7" width="6" height="6" rx="1" fill="#0a6cd8" /></svg>
      </div>
    </div>
  );
}

function NetWidget() {
  return (
    <div className="absolute right-0 bottom-[6px] z-20 h-[61px] w-[160px]">
      <div className="absolute top-[9px] left-10 flex h-[42px] w-[90px] flex-col justify-center rounded-full bg-[#2d313d]/95 pr-[35px] pl-3 font-['Noto_Sans'] text-[12px] leading-[21px] text-white shadow-[0_0_4px_rgba(0,0,0,0.4)]">
        <span className="flex items-center justify-end">
          <span className="mr-auto text-[#4db4ff]">↑</span>0<span className="text-[10px] text-[#b9bcc4]">K/s</span>
        </span>
        <span className="flex items-center justify-end">
          <span className="mr-auto text-[#39c24a]">↓</span>0.1<span className="text-[10px] text-[#b9bcc4]">K/s</span>
        </span>
      </div>
      <svg width="44" height="42" viewBox="0 0 44 42" className="absolute top-4 left-0 opacity-80">
        <defs>
          <linearGradient id="swirl" x1="1" y1="0" x2="0" y2="1">
            <stop offset="0" stopColor="#45b24a" />
            <stop offset=".6" stopColor="#9fd23c" />
            <stop offset="1" stopColor="#f2e635" />
          </linearGradient>
        </defs>
        <path d="M42 2C24 0 4 8 1 23c-1 7 5 9 10 8-5-4-4-11 2-17C20 7 30 4 42 2z" fill="#3d8fdc" />
        <path d="M20 10c-8 4-11 14-5 18 5 2 9 0 12-4-4 2-8 2-9-2-1-5 3-9 8-10 3-1 5 0 5 1 0-4-6-5-11-3z" fill="#3d8fdc" />
        <path d="M29 10c9-2 13 3 10 11-4 10-16 17-35 19 14-4 25-11 28-20 1-5 0-8-3-10z" fill="url(#swirl)" />
      </svg>
      <div className="absolute top-0 right-px flex size-[60px] items-center justify-center rounded-full bg-[#4b5161]/95 text-white shadow-[0_0_4px_rgba(0,0,0,0.5)]">
        <svg width="60" height="60" viewBox="0 0 60 60" className="absolute inset-0" fill="none" strokeWidth="2">
          <path d="M30 4.500A25.500 25.500 0 0 1 55.500 30" stroke="#4fe0c8" />
          <path d="M55.500 30A25.500 25.500 0 0 1 30 55.500" stroke="#8fd66a" />
          <path d="M30 55.500A25.500 25.500 0 0 1 4.500 30" stroke="#f2b04c" />
        </svg>
        <span className="font-['Open_Sans'] text-[23px] leading-6 font-light">75</span>
        <span className="mt-2 text-[10px]">%</span>
      </div>
      {/* site watermark */}
      <div className="absolute top-[15px] left-11 text-[21px] leading-6 font-bold whitespace-nowrap text-[#1d6fc4]/60">极光下载站</div>
      <div className="absolute top-[42px] left-11 font-['Liberation_Sans'] text-[17px] leading-4 font-bold whitespace-nowrap text-[#35ad43]/80">www.xz7.com</div>
    </div>
  );
}

export default function App() {
  return (
    <div className="relative flex h-screen flex-col overflow-hidden bg-[#f5f7f9] font-['Noto_Sans','Noto_Sans_CJK_SC',sans-serif] text-[12px] text-[#242c3d]">
      <TitleBar />
      <MenuBar />
      <Ribbon />
      <div className="flex min-h-0 flex-1">
        <LeftRail />
        <TocPanel />
        <Canvas />
        <ScrollBar />
        <PropertiesPanel />
        <RightRail />
      </div>
      <StatusBar />
      <ImeBar />
      <NetWidget />
    </div>
  );
}
